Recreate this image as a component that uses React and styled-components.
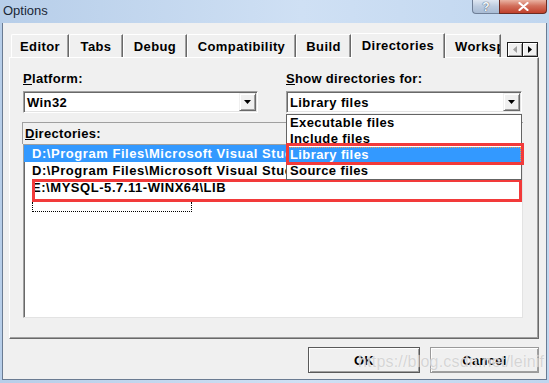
import React from 'react';
import styled, { createGlobalStyle } from 'styled-components';

const GlobalStyle = createGlobalStyle`
  html, body {
    margin: 0;
    padding: 0;
    overflow: hidden;
    background: #ffffff;
  }
`;

const Window = styled.div`
  position: relative;
  width: 549px;
  height: 383px;
  display: flex;
  flex-direction: column;
  background: linear-gradient(to right, #b7cee9, #cfe0f4 55%, #c0d6ef);
  font-family: 'Liberation Sans', Arial, sans-serif;
  overflow: hidden;
`;

const TitleBar = styled.div`
  height: 23px;
  display: flex;
  align-items: flex-start;
  flex-shrink: 0;
`;

const Title = styled.div`
  padding-left: 3px;
  margin-top: 1px;
  line-height: 20px;
  font-size: 13px;
  color: #1b2736;
`;

const TitleButtons = styled.div`
  margin-left: auto;
  margin-right: 2px;
  display: flex;
`;

const HelpButton = styled.div`
  width: 27px;
  height: 14px;
  box-sizing: border-box;
  border: 1px solid #6f7f97;
  border-top: none;
  border-right: none;
  border-bottom-left-radius: 4px;
  background: linear-gradient(#dfe7f2, #bccbdf 50%, #a9bcd5);
  display: flex;
  align-items: center;
  justify-content: center;
  font-size: 12px;
  font-weight: bold;
  color: #f4f7fb;
  text-shadow: 0 0 1px #4b5b72, 0 0 1px #4b5b72;
  line-height: 1;
`;

const CloseButton = styled.div`
  width: 48px;
  height: 14px;
  box-sizing: border-box;
  border: 1px solid #6c2b22;
  border-top: none;
  border-bottom-right-radius: 4px;
  background: linear-gradient(#eab3a3, #d2705c 45%, #c0402c);
  display: flex;
  align-items: center;
  justify-content: center;
`;

const Client = styled.div`
  flex: 1;
  margin: 0 2px 3px 2px;
  border: 1px solid #6a7b92;
  border-top: none;
  background: #f0f0f0;
  padding: 10px 7px 0 6px;
  display: flex;
  flex-direction: column;
`;

const TabRow = styled.div`
  position: relative;
  z-index: 2;
  height: 24px;
  display: flex;
  align-items: flex-end;
  padding-left: 2px;
`;

const Tab = styled.div`
  width: ${(p) => p.$w}px;
  height: ${(p) => (p.$active ? 25 : 23)}px;
  margin-bottom: ${(p) => (p.$active ? -1 : 0)}px;
  box-sizing: border-box;
  flex-shrink: 0;
  background: #f0f0f0;
  border-top: 1px solid #ffffff;
  border-left: 1px solid #ffffff;
  border-right: 1px solid #696969;
  box-shadow: inset -1px 0 #a0a0a0;
  border-top-left-radius: 2px;
  display: flex;
  align-items: center;
  justify-content: ${(p) => (p.$clip ? 'flex-start' : 'center')};
  padding-left: ${(p) => (p.$clip ? 9 : 0)}px;
  padding-bottom: ${(p) => (p.$active ? 2 : 0)}px;
  overflow: hidden;
  white-space: nowrap;
  font-size: 13px;
  font-weight: bold;
  letter-spacing: 0.4px;
  color: #000;
`;

const ScrollArrows = styled.div`
  margin-left: auto;
  margin-right: 1px;
  display: flex;
  height: 15px;
  border: 1px solid #1a1a1a;
  box-sizing: border-box;
`;

const ArrowButton = styled.div`
  width: 14px;
  height: 13px;
  background: #f0f0f0;
  box-shadow: inset 1px 1px #fff, inset -1px -1px #a0a0a0;
  display: flex;
  align-items: center;
  justify-content: center;
  & + & {
    border-left: 1px solid #1a1a1a;
  }
`;

const Panel = styled.div`
  position: relative;
  z-index: 1;
  height: 282px;
  box-sizing: border-box;
  border: 1px solid;
  border-color: #ffffff #696969 #696969 #ffffff;
  box-shadow: inset -1px -1px #a0a0a0;
  padding: 13px 15px 0 13px;
  display: flex;
  flex-direction: column;
`;

const SelectRow = styled.div`
  display: grid;
  grid-template-columns: 235px 236px;
  column-gap: 28px;
`;

const Field = styled.div`
  position: relative;
  display: flex;
  flex-direction: column;
`;

const Label = styled.div`
  font-size: 13px;
  font-weight: bold;
  letter-spacing: 0.3px;
  line-height: 15px;
  color: #000;
  padding-left: ${(p) => p.$indent || 0}px;
`;

const Select = styled.div`
  margin-top: 5px;
  height: 22px;
  box-sizing: border-box;
  background: #fff;
  border: 1px solid;
  border-color: #a0a0a0 #ffffff #ffffff #a0a0a0;
  box-shadow: inset 1px 1px #696969, inset -1px -1px #e3e3e3;
  display: flex;
  align-items: center;
  padding: 0 1px 0 3px;
  font-size: 13px;
  font-weight: bold;
  letter-spacing: 0.4px;
  color: #000;
`;

const SelectValue = styled.span`
  flex: 1;
`;

const DropButton = styled.div`
  width: 17px;
  height: 18px;
  box-sizing: border-box;
  background: #f0f0f0;
  border: 1px solid;
  border-color: #f0f0f0 #696969 #696969 #f0f0f0;
  box-shadow: inset 1px 1px #fff, inset -1px -1px #a0a0a0;
  display: flex;
  align-items: center;
  justify-content: center;
`;

const DropList = styled.div`
  position: absolute;
  z-index: 5;
  left: 0;
  top: 100%;
  margin-top: 1px;
  width: 236px;
  box-sizing: border-box;
  background: #fff;
  border: 1px solid #646464;
`;

const DropItem = styled.div`
  height: 16px;
  line-height: 16px;
  padding-left: 3px;
  font-size: 13px;
  font-weight: bold;
  letter-spacing: 0.4px;
  color: ${(p) => (p.$selected ? '#fff' : '#000')};
  background: ${(p) => (p.$selected ? '#3399ff' : 'transparent')};
  outline: ${(p) => (p.$selected ? '1px dotted #e8a050' : 'none')};
  outline-offset: -1px;
`;

const LibraryMark = styled.div`
  position: absolute;
  left: -1px;
  top: 28px;
  width: 238px;
  height: 22px;
  box-sizing: border-box;
  border: 3px solid #f23a3a;
  pointer-events: none;
`;

const DirGroup = styled.div`
  margin-top: 9px;
  display: flex;
  flex-direction: column;
`;

const DirHeader = styled.div`
  height: 22px;
  margin-left: -1px;
  box-sizing: border-box;
  border-top: 1px solid #a0a0a0;
  border-left: 1px solid #a0a0a0;
  display: flex;
  align-items: center;
`;

const ListBox = styled.div`
  position: relative;
  height: 174px;
  box-sizing: border-box;
  background: #fff;
  border: 1px solid;
  border-color: #a0a0a0 #e3e3e3 #e3e3e3 #a0a0a0;
  box-shadow: inset 1px 1px #696969;
  overflow: hidden;
`;

const ListRow = styled.div`
  height: 17px;
  line-height: 18px;
  padding-left: 8px;
  white-space: nowrap;
  overflow: hidden;
  font-size: 13px;
  font-weight: bold;
  letter-spacing: 0.55px;
  color: ${(p) => (p.$selected ? '#fff' : '#000')};
  background: ${(p) => (p.$selected ? '#3399ff' : 'transparent')};
`;

const NewEntry = styled.div`
  margin: 6px 0 0 8px;
  width: 160px;
  height: 10px;
  box-sizing: border-box;
  border: 1px dotted #000;
  border-top: none;
`;

const MysqlMark = styled.div`
  position: absolute;
  left: 8px;
  top: 34px;
  width: 490px;
  height: 23px;
  box-sizing: border-box;
  border: 3px solid #f23a3a;
  pointer-events: none;
`;

const ButtonRow = styled.div`
  margin-top: 8px;
  display: flex;
  justify-content: flex-end;
  gap: 10px;
`;

const Button = styled.div`
  width: ${(p) => p.$w}px;
  height: 26px;
  box-sizing: border-box;
  background: #f0f0f0;
  border: 1px solid ${(p) => (p.$default ? '#5a5a5a' : '#9a9a9a')};
  box-shadow: inset 1px 1px #fff, inset -1px -1px #a0a0a0;
  display: flex;
  align-items: center;
  justify-content: center;
  font-size: 13px;
  font-weight: bold;
  letter-spacing: 0.3px;
  color: #000;
`;

const Watermark = styled.div`
  position: absolute;
  left: 358px;
  top: 353px;
  font-size: 16px;
  letter-spacing: 0.2px;
  color: rgba(200, 200, 200, 0.75);
  text-shadow: 0 0 1px rgba(255, 255, 255, 0.9);
  pointer-events: none;
  white-space: nowrap;
`;

const DownTriangle = () => (
  <svg width="7" height="4" viewBox="0 0 7 4">
    <path d="M0 0h7L3.5 4z" fill="#000" />
  </svg>
);

const tabs = [
  { name: 'Editor', w: 58 },
  { name: 'Tabs', w: 54 },
  { name: 'Debug', w: 64 },
  { name: 'Compatibility', w: 109 },
  { name: 'Build', w: 55 },
  { name: 'Directories', w: 94, active: true },
  { name: 'Workspace', w: 56, clip: true },
];

const dirs = [
  'D:\\Program Files\\Microsoft Visual Studio\\VC98\\LIB',
  'D:\\Program Files\\Microsoft Visual Studio\\VC98\\MFC\\LIB',
  'E:\\MYSQL-5.7.11-WINX64\\LIB',
];

const showFor = ['Executable files', 'Include files', 'Library files', 'Source files'];

function App() {
  return (
    <>
      <GlobalStyle />
      <Window>
        <TitleBar>
          <Title>Options</Title>
          <TitleButtons>
            <HelpButton>?</HelpButton>
            <CloseButton>
              <svg width="11" height="9" viewBox="0 0 11 9">
                <path d="M1.5 1l8 7M9.5 1l-8 7" stroke="#fff" strokeWidth="2.2" strokeLinecap="round" />
              </svg>
            </CloseButton>
          </TitleButtons>
        </TitleBar>

        <Client>
          <TabRow>
            {tabs.map((t) => (
              <Tab key={t.name} $w={t.w} $active={t.active} $clip={t.clip}>
                {t.name}
              </Tab>
            ))}
            <ScrollArrows>
              <ArrowButton>
                <svg width="4" height="7" viewBox="0 0 4 7">
                  <path d="M4 0v7L0 3.5z" fill="#a0a0a0" />
                </svg>
              </ArrowButton>
              <ArrowButton>
                <svg width="4" height="7" viewBox="0 0 4 7">
                  <path d="M0 0v7l4-3.5z" fill="#000" />
                </svg>
              </ArrowButton>
            </ScrollArrows>
          </TabRow>

          <Panel>
            <SelectRow>
              <Field>
                <Label>
                  <u>P</u>latform:
                </Label>
                <Select>
                  <SelectValue>Win32</SelectValue>
                  <DropButton>
                    <DownTriangle />
                  </DropButton>
                </Select>
              </Field>
              <Field>
                <Label>
                  <u>S</u>how directories for:
                </Label>
                <Select>
                  <SelectValue>Library files</SelectValue>
                  <DropButton>
                    <DownTriangle />
                  </DropButton>
                </Select>
                <DropList>
                  {showFor.map((s) => (
                    <DropItem key={s} $selected={s === 'Library files'}>
                      {s}
                    </DropItem>
                  ))}
                  <LibraryMark />
                </DropList>
              </Field>
            </SelectRow>

            <DirGroup>
              <DirHeader>
                <Label $indent={2}>
                  <u>D</u>irectories:
                </Label>
              </DirHeader>
              <ListBox>
                {dirs.map((d, i) => (
                  <ListRow key={d} $selected={i === 0}>
                    {d}
                  </ListRow>
                ))}
                <NewEntry />
                <MysqlMark />
              </ListBox>
            </DirGroup>
          </Panel>

          <ButtonRow>
            <Button $w={112} $default>
              OK
            </Button>
            <Button $w={109}>Cancel</Button>
          </ButtonRow>
        </Client>

        <Watermark>https://blog.csdn.net/leinif</Watermark>
      </Window>
    </>
  );
}

export default App;
